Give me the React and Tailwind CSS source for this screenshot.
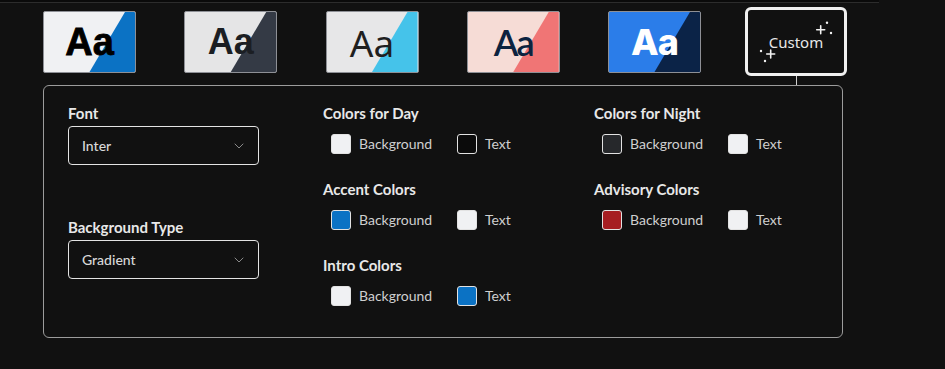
import React from "react";
import { ChevronDown } from "lucide-react";

const tiles = [
  { left: "#f0f1f3", right: "#0b72c4", color: "#000000", font: "font-['Liberation_Sans',sans-serif] font-bold text-[38px] [-webkit-text-stroke:0.8px_#000]" },
  { left: "#e5e5e6", right: "#343a45", color: "#1b1e23", font: "font-['Liberation_Sans',sans-serif] font-bold text-[36px]" },
  { left: "#e7e7e8", right: "#45c3ea", color: "#1f1f1f", font: "font-['Noto_Sans',sans-serif] font-normal text-[37px]" },
  { left: "#f6dcd6", right: "#f07575", color: "#0c2340", font: "font-['Lato',sans-serif] font-semibold text-[36px] tracking-[-2px]" },
  { left: "#2b7de9", right: "#0b2347", color: "#ffffff", font: "font-['Inter',sans-serif] font-extrabold text-[36px] tracking-[-1px]" },
];

function Tile({ t }) {
  return (
    <div
      className="relative mt-[4px] w-[93px] h-[62px] shrink-0 overflow-hidden rounded-[2px] border border-[#8e9096]"
      style={{ background: t.left }}
    >
      <div
        className="absolute inset-0 [clip-path:polygon(89%_0,100%_0,100%_100%,50%_100%)]"
        style={{ background: t.right }}
      />
      <div className="relative flex h-full items-center justify-center">
        <span className={`leading-none ${t.font}`} style={{ color: t.color }}>
          Aa
        </span>
      </div>
    </div>
  );
}

function Sparkles() {
  return (
    <svg className="absolute inset-0" width="96" height="63" viewBox="0 0 96 63" fill="none">
      <g stroke="#f2f2f2" strokeWidth="1.6" strokeLinecap="round">
        <path d="M72.7 15.7v8M68.7 19.7h8" />
        <path d="M22.7 40v8M18.7 44h8" />
      </g>
      <g fill="#f2f2f2">
        <circle cx="79" cy="12.7" r="1.2" />
        <circle cx="83" cy="23" r="1.2" />
        <circle cx="13" cy="41" r="1.2" />
        <circle cx="17" cy="51" r="1.2" />
      </g>
    </svg>
  );
}

function Select({ value }) {
  return (
    <div className="flex h-[39px] w-[191px] items-center justify-between rounded-[4px] border border-[#e4e4e4] pl-[13px] pr-[11px]">
      <span className="text-[14px] font-medium text-[#d9d9d9]">{value}</span>
      <ChevronDown size={16} strokeWidth={1.5} color="#8a8a8a" />
    </div>
  );
}

function Swatch({ color, label }) {
  return (
    <div className="flex items-center gap-2">
      <div className="h-[20px] w-[20px] rounded-[3px] border border-[#e2e2e2]" style={{ background: color }} />
      <span className="text-[14px] leading-[20px] text-[#cfcfcf]">{label}</span>
    </div>
  );
}

function Group({ title, bg, text }) {
  return (
    <div>
      <h3 className="text-[15px] font-bold leading-[18px] text-[#e8e8e8]">{title}</h3>
      <div className="mt-3 flex items-center pl-2">
        <div className="w-[126px]">
          <Swatch color={bg} label="Background" />
        </div>
        <Swatch color={text} label="Text" />
      </div>
    </div>
  );
}

export default function App() {
  return (
    <div className="min-h-screen w-[945px] bg-[#111111] font-['Lato',sans-serif]">
      <div className="h-[3px] w-[879px] border-b border-[#2c2c2c] bg-[#0a0a0a]" />
      <div className="px-[43px] pt-[4px]">
        <div className="flex items-start gap-[48.25px]">
          {tiles.map((t, i) => (
            <Tile key={i} t={t} />
          ))}
          <div className="ml-[-4.25px] flex flex-col items-center">
            <div className="relative flex h-[69px] w-[102px] items-center justify-center rounded-[6px] border-[3px] border-[#f0f0f0] pt-[2px]">
              <span className="font-['Noto_Sans',sans-serif] text-[15px] text-[#e8e8e8]">Custom</span>
              <Sparkles />
            </div>
            <div className="h-[9px] w-px bg-[#cfcfcf]" />
          </div>
        </div>

        <div className="grid h-[253px] w-[800px] grid-cols-[255px_271px_1fr] rounded-[6px] border border-[#9c9c9c] pl-[24px] pt-[18px]">
          <div>
            <h3 className="mb-1 text-[15px] font-bold leading-[18px] text-[#e8e8e8]">Font</h3>
            <Select value="Inter" />
            <h3 className="mb-1 mt-[53px] text-[15px] font-bold leading-[18px] text-[#e8e8e8]">Background Type</h3>
            <Select value="Gradient" />
          </div>
          <div className="flex flex-col gap-[26px]">
            <Group title="Colors for Day" bg="#f0f1f3" text="#0b0b0b" />
            <Group title="Accent Colors" bg="#0b72c4" text="#f0f1f3" />
            <Group title="Intro Colors" bg="#f0f1f3" text="#0b72c4" />
          </div>
          <div className="flex flex-col gap-[26px]">
            <Group title="Colors for Night" bg="#26282b" text="#f0f1f3" />
            <Group title="Advisory Colors" bg="#a61e22" text="#f0f1f3" />
          </div>
        </div>
      </div>
    </div>
  );
}
